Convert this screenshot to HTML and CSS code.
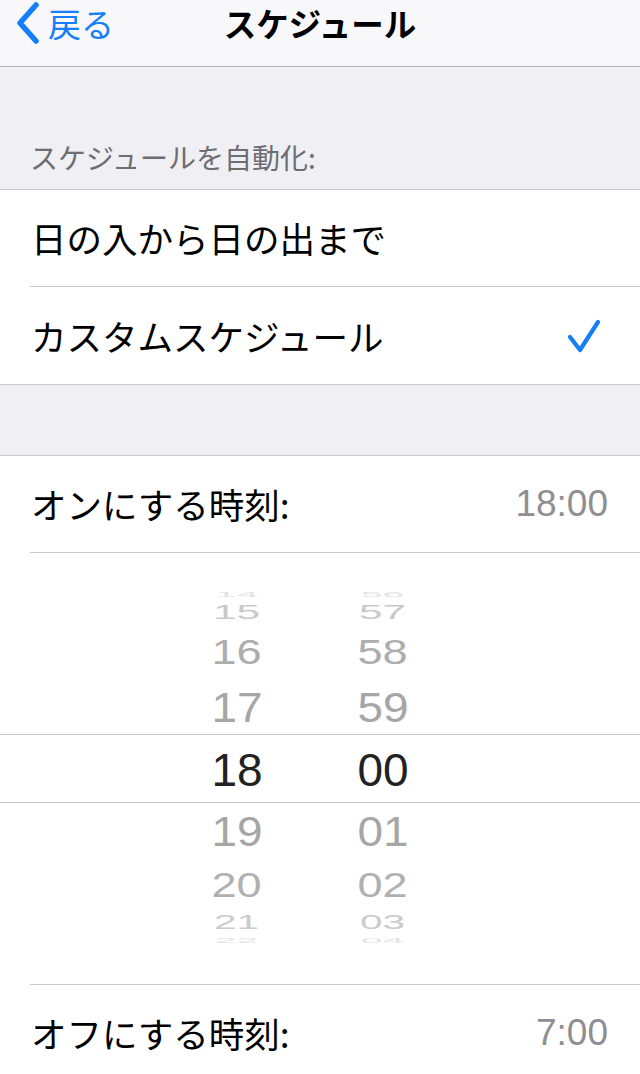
FILE: index.html
```html
<!DOCTYPE html>
<html lang="ja">
<head>
<meta charset="utf-8">
<title>スケジュール</title>
<link rel="stylesheet" href="styles.css">
</head>
<body>
<div class="screen">
  <header class="nav">
    <div class="nav-bar">
      <div class="back">
        <svg class="chev" width="26" height="42" viewBox="0 0 26 42"><path d="M21 3 L5 21 L21 39" fill="none" stroke="#157efb" stroke-width="5.5" stroke-linecap="round" stroke-linejoin="round"/></svg>
        <span class="back-label">戻る</span>
      </div>
      <div class="title">スケジュール</div>
    </div>
  </header>

  <div class="section-head">スケジュールを自動化:</div>
  <div class="group">
    <div class="row"><span class="label">日の入から日の出まで</span></div>
    <div class="sep"></div>
    <div class="row"><span class="label">カスタムスケジュール</span>
      <svg class="check" width="36" height="36" viewBox="0 0 36 36"><path d="M4 19 L14 32 L32 4" fill="none" stroke="#157efb" stroke-width="4.2" stroke-linecap="round" stroke-linejoin="round"/></svg>
    </div>
  </div>

  <div class="gap"></div>

  <div class="group">
    <div class="row"><span class="label">オンにする時刻:</span><span class="value">18:00</span></div>
    <div class="sep"></div>
    <div class="picker">
      <div class="prow r-a"><span class="cell"><i>14</i></span><span class="cell"><i>56</i></span></div>
      <div class="prow r-b"><span class="cell"><i>15</i></span><span class="cell"><i>57</i></span></div>
      <div class="prow r-c"><span class="cell"><i>16</i></span><span class="cell"><i>58</i></span></div>
      <div class="prow r-d"><span class="cell"><i>17</i></span><span class="cell"><i>59</i></span></div>
      <div class="prow r-sel"><span class="cell"><i>18</i></span><span class="cell"><i>00</i></span></div>
      <div class="prow r-e"><span class="cell"><i>19</i></span><span class="cell"><i>01</i></span></div>
      <div class="prow r-f"><span class="cell"><i>20</i></span><span class="cell"><i>02</i></span></div>
      <div class="prow r-g"><span class="cell"><i>21</i></span><span class="cell"><i>03</i></span></div>
      <div class="prow r-h"><span class="cell"><i>22</i></span><span class="cell"><i>04</i></span></div>
    </div>
    <div class="sep"></div>
    <div class="row"><span class="label">オフにする時刻:</span><span class="value">7:00</span></div>
  </div>
</div>
</body>
</html>
```

FILE: styles.css
```css
html, body {
  margin: 0;
  padding: 0;
  height: 1074px;
  overflow: hidden;
  background: #efeff4;
}
.screen {
  width: 640px;
  font-family: "Noto Sans CJK JP", "Liberation Sans", sans-serif;
  color: #000;
}
.nav {
  height: 66px;
  background: #f8f8fa;
  border-bottom: 1px solid #b4b4b8;
}
.nav-bar {
  height: 46px;
  position: relative;
  display: flex;
  align-items: center;
  justify-content: center;
}
.back {
  position: absolute;
  left: 15px;
  top: 2px;
  height: 42px;
  display: flex;
  align-items: center;
  gap: 7px;
  color: #157efb;
}
.back-label {
  font-size: 33px;
  line-height: 42px;
}
.title {
  font-size: 32.5px;
  font-weight: 700;
  line-height: 42px;
}
.section-head {
  height: 122px;
  box-sizing: border-box;
  padding: 0 0 14px 30px;
  display: flex;
  align-items: flex-end;
  font-size: 28px;
  line-height: 36px;
  color: #6d6d72;
}
.group {
  background: #fff;
  border-top: 1px solid #c8c7cc;
  border-bottom: 1px solid #c8c7cc;
}
.row {
  height: 96px;
  display: flex;
  align-items: center;
  justify-content: space-between;
  padding: 0 32px 0 31px;
}
.group > .row:nth-child(3) {
  height: 97px;
}
.label {
  font-size: 35.5px;
  line-height: 48px;
}
.value {
  font-family: "Liberation Sans", "Noto Sans CJK JP", sans-serif;
  font-size: 37px;
  color: #8e8e93;
  line-height: 48px;
}
.check {
  margin-right: 6px;
}
.sep {
  height: 1px;
  margin-left: 30px;
  background: #c8c7cc;
}
.gap {
  height: 70px;
}
.picker {
  padding: 35px 0 37px;
}
.prow {
  display: grid;
  grid-template-columns: 187px 100px 46px 100px;
  font-family: "Liberation Sans", sans-serif;
  font-size: 46px;
}
.cell {
  text-align: center;
}
.prow .cell:first-child { grid-column: 2; }
.prow .cell:last-child { grid-column: 4; }
.cell i {
  font-style: normal;
  display: inline-block;
}
.r-a { height: 12px; line-height: 12px; color: #e3e3e3; }
.r-a i { transform: scale(0.85, 0.16); }
.r-b { height: 24px; line-height: 24px; color: #c9c9c9; }
.r-b i { transform: scale(0.92, 0.45); }
.r-c { height: 56px; line-height: 56px; color: #adadad; }
.r-c i { transform: scale(0.98, 0.78); }
.r-d { height: 54px; line-height: 54px; color: #a6a6a6; }
.r-d i { transform: scaleY(0.92); }
.r-sel {
  height: 67px;
  line-height: 70px;
  color: #222;
  border-top: 1px solid #c8c7cc;
  border-bottom: 1px solid #c8c7cc;
}
.r-e { height: 56px; line-height: 56px; color: #a6a6a6; }
.r-e i { transform: scaleY(0.92); }
.r-f { height: 52px; line-height: 52px; color: #b0b0b0; }
.r-f i { transform: scale(0.98, 0.78); }
.r-g { height: 22px; line-height: 22px; color: #cbcbcb; }
.r-g i { transform: scale(0.88, 0.45); }
.r-h { height: 14px; line-height: 14px; color: #e3e3e3; }
.r-h i { transform: scale(0.85, 0.16); }
```
